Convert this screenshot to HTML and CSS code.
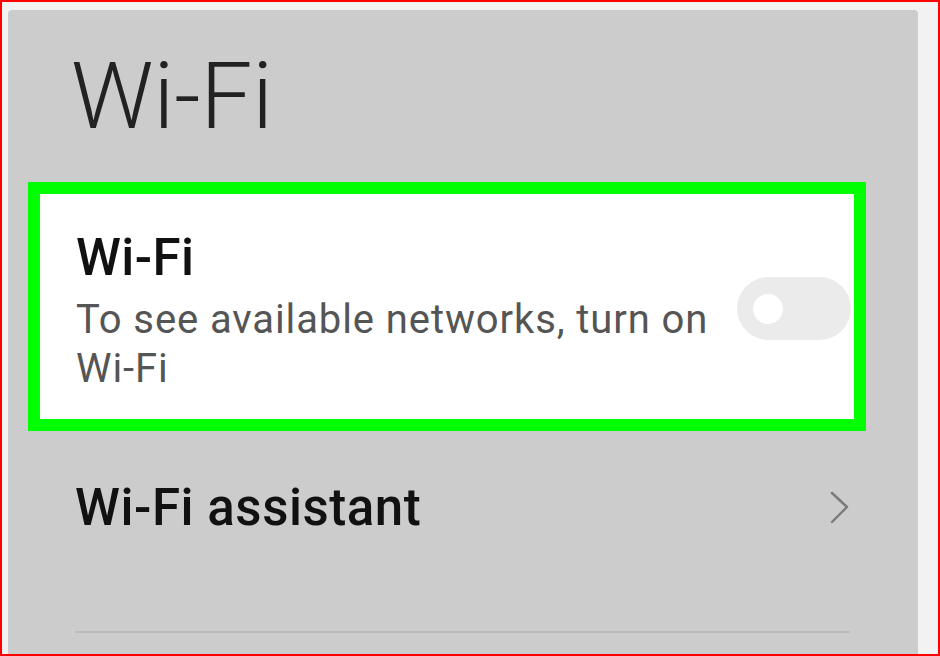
FILE: index.html
```html
<!DOCTYPE html>
<html lang="en">
<head>
<meta charset="utf-8">
<title>Wi-Fi</title>
<link rel="stylesheet" href="styles.css">
</head>
<body>
<div class="frame">
  <div class="panel">
    <h1 class="page-title">Wi-Fi</h1>
    <div class="card">
      <div class="card-text">
        <div class="card-title">Wi-Fi</div>
        <div class="card-sub">To see available networks, turn on Wi-Fi</div>
      </div>
      <div class="toggle"><span class="knob"></span></div>
    </div>
    <div class="row">
      <div class="row-title">Wi-Fi assistant</div>
      <svg class="chevron" width="20" height="34" viewBox="0 0 20 34" aria-hidden="true">
        <path d="M2 2 L17 16 L2 31" fill="none" stroke="#7a7a7a" stroke-width="2.4" stroke-linecap="round" stroke-linejoin="round"/>
      </svg>
    </div>
    <div class="divider"></div>
  </div>
</div>
</body>
</html>
```
FILE: styles.css
```css
html, body {
  margin: 0;
  padding: 0;
}
body {
  font-family: Roboto, "Liberation Sans", sans-serif;
  background: #f2f2f2;
}
.frame {
  width: 940px;
  height: 656px;
  box-sizing: border-box;
  border: 2px solid #ff0000;
  background: #f2f2f2;
  padding: 8px 20px 0 6px;
  display: flex;
  flex-direction: column;
  overflow: hidden;
}
.panel {
  flex: 1;
  width: 910px;
  background: #cccccc;
  border-radius: 4px 4px 0 0;
  padding-top: 37px;
  box-sizing: border-box;
}
.page-title {
  margin: 0 0 35px 0;
  padding-left: 63px;
  font-size: 92px;
  line-height: 100px;
  font-weight: 300;
  color: #222222;
}
.card {
  margin-left: 20px;
  width: 838px;
  box-sizing: border-box;
  border: 12px solid #00ff00;
  background: #ffffff;
  padding: 34px 3px 26px 36px;
  display: flex;
  align-items: center;
}
.card-text {
  flex: 1;
  max-width: 670px;
}
.card-title {
  font-size: 51px;
  line-height: 60px;
  font-weight: 500;
  letter-spacing: 0.4px;
  color: #111111;
  margin-bottom: 7px;
}
.card-sub {
  font-size: 40px;
  line-height: 49px;
  letter-spacing: 0.9px;
  color: #555555;
}
.toggle {
  margin-left: auto;
  margin-bottom: 4px;
  width: 114px;
  height: 63px;
  border-radius: 32px;
  background: #ebebeb;
  display: flex;
  align-items: center;
  padding-left: 16px;
  box-sizing: border-box;
}
.knob {
  width: 30px;
  height: 30px;
  border-radius: 50%;
  background: #ffffff;
}
.row {
  margin-top: 47px;
  padding: 0 68px 0 67px;
  display: flex;
  align-items: center;
  justify-content: space-between;
}
.row-title {
  font-size: 51px;
  line-height: 60px;
  font-weight: 500;
  letter-spacing: 0.55px;
  color: #111111;
}
.chevron {
  display: block;
}
.divider {
  margin: 93px 68px 0 67px;
  height: 2px;
  background: #bcbcbc;
}
```
